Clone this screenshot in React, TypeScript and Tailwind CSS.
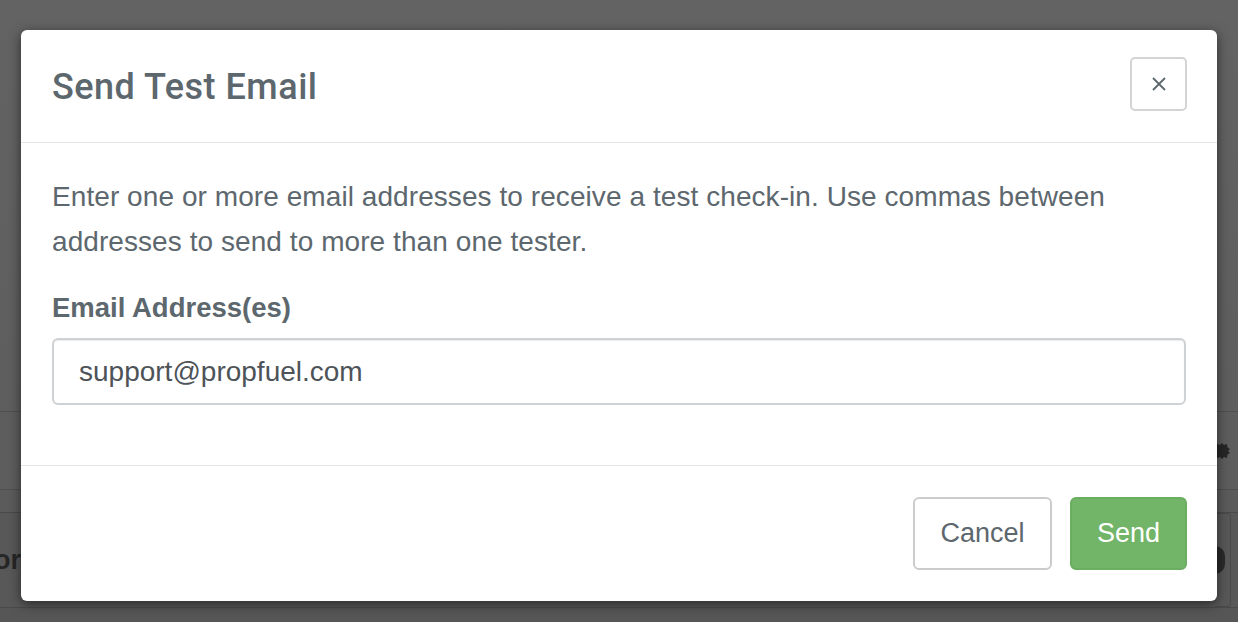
import React from "react";

export default function App() {
  const font = { fontFamily: '"Liberation Sans", Arial, Helvetica, sans-serif' };
  return (
    <div className="relative h-[622px] w-[1238px] overflow-hidden bg-[#5f5f5f]" style={font}>
      {/* background page (dimmed) */}
      <div className="flex h-full flex-col">
        <div className="h-[411px] bg-gradient-to-b from-[#636363] to-[#5e5e5e]" />
        <div className="h-px bg-[#4f4f4f]" />
        <div className="flex h-[77px] items-center justify-end bg-[#5d5d5d] pr-[8px]">
          <svg width="16" height="18" viewBox="0 0 16 18" className="text-[#262626]">
            <path d="M8 1 L10 3 L13 2 L13.5 5.5 L16 7 L14 9 L16 11 L13.5 12.5 L13 16 L10 15 L8 17 L6 15 L3 16 L2.5 12.5 L0 11 L2 9 L0 7 L2.5 5.5 L3 2 L6 3 Z" fill="currentColor" />
          </svg>
        </div>
        <div className="h-px bg-[#4f4f4f]" />
        <div className="h-[22px] bg-[#5b5b5b]" />
        <div className="h-px bg-[#4a4a4a]" />
        <div className="flex h-[94px] items-center justify-between bg-[#585858]">
          <span className="ml-[-6px] text-[27px] font-semibold text-[#262626]">or</span>
          <div className="mr-[7px] flex h-full w-[16px] items-center rounded-r-[4px] border border-l-0 border-[#4a4a4a]">
            <div className="h-[28px] w-[10px] rounded-r-full bg-[#2a2a2a]" />
          </div>
        </div>
        <div className="h-px bg-[#4a4a4a]" />
        <div className="flex-1 bg-[#565656]" />
      </div>

      {/* modal */}
      <div className="absolute left-[21px] top-[30px] flex h-[571px] w-[1196px] flex-col rounded-[6px] bg-white shadow-[0_3px_12px_rgba(0,0,0,0.55)] text-[#5d676e]">
        <div className="flex h-[113px] shrink-0 items-start justify-between border-b border-[#e5e5e5] pl-[31px] pr-[30px]">
          <h4
            className="mt-[37px] text-[36px] font-medium leading-[40px] tracking-[0.5px]"
            style={{ fontFamily: 'Roboto, "Liberation Sans", Arial, sans-serif' }}
          >
            Send Test Email
          </h4>
          <button className="mt-[27px] flex h-[54px] w-[57px] items-center justify-center rounded-[5px] border-2 border-[#d4d4d4] bg-white">
            <svg width="16" height="16" viewBox="0 0 16 16">
              <path d="M2 2 L14 14 M14 2 L2 14" stroke="#5d676e" strokeWidth="1.8" />
            </svg>
          </button>
        </div>
        <div className="flex h-[323px] shrink-0 flex-col border-b border-[#e5e5e5] px-[31px] pt-[31px]">
          <p className="text-[28px] leading-[45px] tracking-[0.07px]">
            Enter one or more email addresses to receive a test check-in. Use commas between addresses to send to more than one tester.
          </p>
          <label className="mt-[21px] text-[27.5px] font-bold leading-[45px]">Email Address(es)</label>
          <div className="mt-[8px] flex h-[67px] items-center rounded-[6px] border-2 border-[#cfd2d4] px-[25px] text-[28px] text-[#4d5358] shadow-[inset_0_1px_1px_rgba(0,0,0,0.08)]">
            support@propfuel.com
          </div>
        </div>
        <div className="flex flex-1 items-start justify-end gap-[18px] pr-[30px] pt-[31px]">
          <button className="flex h-[73px] w-[139px] items-center justify-center rounded-[6px] border-2 border-[#cccccc] bg-white text-[27px] text-[#5d676e]">
            Cancel
          </button>
          <button className="flex h-[73px] w-[117px] items-center justify-center rounded-[6px] border-2 border-[#6cae61] bg-[#72b568] text-[27px] text-white">
            Send
          </button>
        </div>
      </div>
    </div>
  );
}
